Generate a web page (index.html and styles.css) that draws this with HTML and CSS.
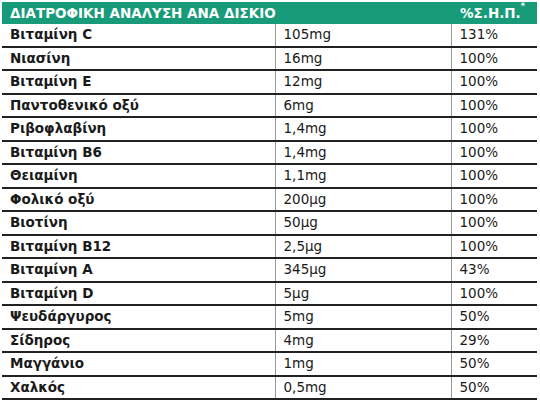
FILE: index.html
```html
<!DOCTYPE html>
<html lang="el">
<head>
  <meta charset="UTF-8">
  <title>Διατροφική ανάλυση</title>
  <link rel="stylesheet" href="styles.css">
</head>
<body>
  <table class="nutrition">
    <colgroup>
      <col class="col-name">
      <col class="col-amount">
      <col class="col-pct">
    </colgroup>
    <thead>
      <tr>
        <th colspan="2">ΔΙΑΤΡΟΦΙΚΗ ΑΝΑΛΥΣΗ ΑΝΑ ΔΙΣΚΙΟ</th>
        <th class="pct">%Σ.Η.Π.<sup>*</sup></th>
      </tr>
    </thead>
    <tbody>
      <tr><td class="name">Βιταμίνη C</td><td>105mg</td><td>131%</td></tr>
      <tr><td class="name">Νιασίνη</td><td>16mg</td><td>100%</td></tr>
      <tr><td class="name">Βιταμίνη E</td><td>12mg</td><td>100%</td></tr>
      <tr><td class="name">Παντοθενικό οξύ</td><td>6mg</td><td>100%</td></tr>
      <tr><td class="name">Ριβοφλαβίνη</td><td>1,4mg</td><td>100%</td></tr>
      <tr><td class="name">Βιταμίνη B6</td><td>1,4mg</td><td>100%</td></tr>
      <tr><td class="name">Θειαμίνη</td><td>1,1mg</td><td>100%</td></tr>
      <tr><td class="name">Φολικό οξύ</td><td>200μg</td><td>100%</td></tr>
      <tr><td class="name">Βιοτίνη</td><td>50μg</td><td>100%</td></tr>
      <tr><td class="name">Βιταμίνη B12</td><td>2,5μg</td><td>100%</td></tr>
      <tr><td class="name">Βιταμίνη A</td><td>345μg</td><td>43%</td></tr>
      <tr><td class="name">Βιταμίνη D</td><td>5μg</td><td>100%</td></tr>
      <tr><td class="name">Ψευδάργυρος</td><td>5mg</td><td>50%</td></tr>
      <tr><td class="name">Σίδηρος</td><td>4mg</td><td>29%</td></tr>
      <tr><td class="name">Μαγγάνιο</td><td>1mg</td><td>50%</td></tr>
      <tr><td class="name">Χαλκός</td><td>0,5mg</td><td>50%</td></tr>
    </tbody>
  </table>
</body>
</html>
```

FILE: styles.css
```css
body {
  margin: 0;
  padding: 2px 0 0 2px;
  background: #fff;
  font-family: "DejaVu Sans", sans-serif;
  color: #1a1a1a;
}
.nutrition {
  border-collapse: collapse;
  width: 535px;
  table-layout: fixed;
}
.col-name { width: 273px; }
.col-amount { width: 176px; }
.col-pct { width: 86px; }
.nutrition th {
  background: #179b78;
  color: #fff;
  font-size: 13.5px;
  font-weight: 700;
  text-align: left;
  height: 22px;
  padding: 0 0 0 8px;
  line-height: 22px;
  white-space: nowrap;
}
.nutrition th.pct { padding-left: 9px; }
.nutrition th sup {
  font-size: 8px;
  vertical-align: top;
  line-height: 10px;
}
.nutrition td {
  height: 21.5px;
  padding: 0 0 0 8px;
  font-size: 13.5px;
  line-height: 21px;
  border-bottom: 2px solid #222;
  border-left: 1px solid #999;
  white-space: nowrap;
}
.nutrition td:first-child { border-left: none; }
.nutrition td.name { font-weight: 700; }
```
